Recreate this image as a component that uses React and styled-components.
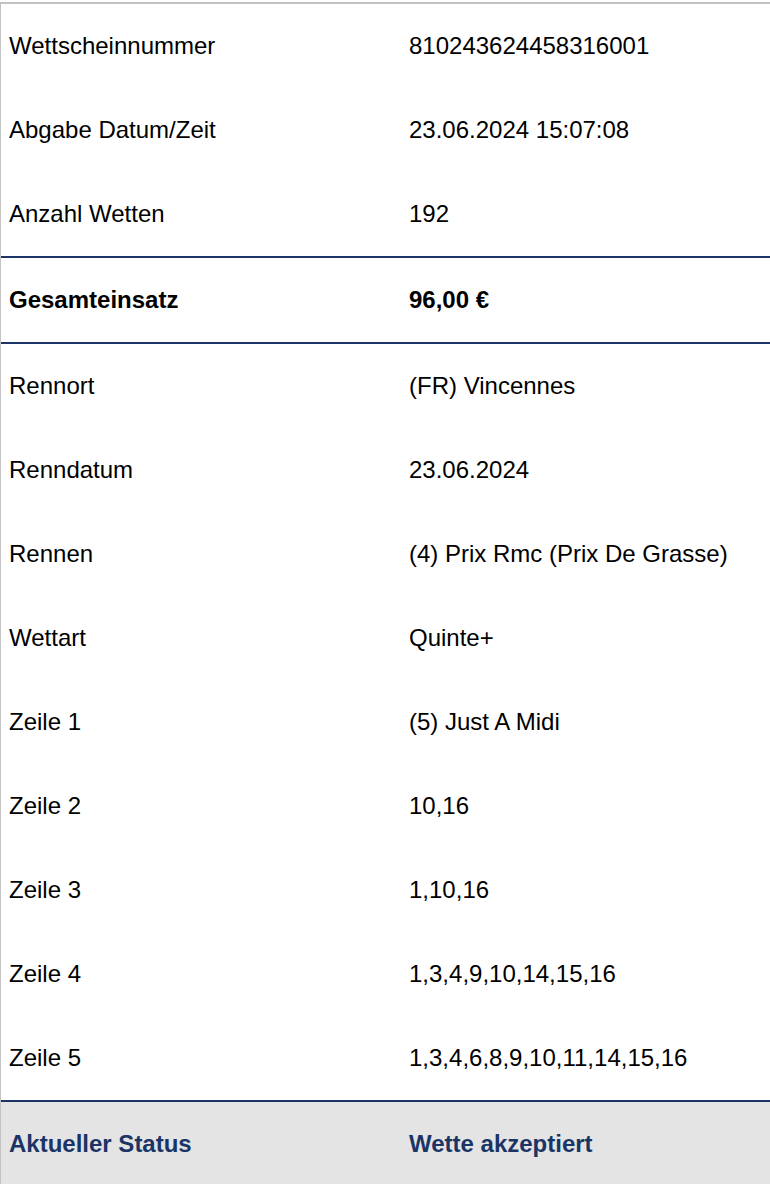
import React from "react";
import styled, { createGlobalStyle } from "styled-components";

const GlobalStyle = createGlobalStyle`
  body {
    margin: 0;
    background: #fff;
    font-family: "Liberation Sans", Arial, sans-serif;
  }
`;

const details = [
  ["Wettscheinnummer", "810243624458316001"],
  ["Abgabe Datum/Zeit", "23.06.2024 15:07:08"],
  ["Anzahl Wetten", "192"],
];

const race = [
  ["Rennort", "(FR) Vincennes"],
  ["Renndatum", "23.06.2024"],
  ["Rennen", "(4) Prix Rmc (Prix De Grasse)"],
  ["Wettart", "Quinte+"],
  ["Zeile 1", "(5) Just A Midi"],
  ["Zeile 2", "10,16"],
  ["Zeile 3", "1,10,16"],
  ["Zeile 4", "1,3,4,9,10,14,15,16"],
  ["Zeile 5", "1,3,4,6,8,9,10,11,14,15,16"],
];

function App() {
  return (
    <>
      <GlobalStyle />
      <Ticket>
        <Group>
          {details.map(([label, value]) => (
            <Row key={label}>
              <Cell>{label}</Cell>
              <Cell>{value}</Cell>
            </Row>
          ))}
        </Group>
        <Group $divided>
          <Row $bold>
            <Cell>Gesamteinsatz</Cell>
            <Cell>96,00 €</Cell>
          </Row>
        </Group>
        <Group $divided>
          {race.map(([label, value]) => (
            <Row key={label}>
              <Cell>{label}</Cell>
              <Cell>{value}</Cell>
            </Row>
          ))}
        </Group>
        <Group $divided $status>
          <Row $bold>
            <Cell>Aktueller Status</Cell>
            <Cell>Wette akzeptiert</Cell>
          </Row>
        </Group>
      </Ticket>
    </>
  );
}

export default App;

const Ticket = styled.div`
  margin-top: 2px;
  border-top: 2px solid #c2c2c2;
  border-left: 1px solid #c2c2c2;
  color: #000;
`;

const Group = styled.div`
  border-top: ${(p) => (p.$divided ? "2px solid #1b3466" : "none")};
  background: ${(p) => (p.$status ? "#e4e4e4" : "transparent")};
  color: ${(p) => (p.$status ? "#1b3466" : "inherit")};
`;

const Row = styled.div`
  display: grid;
  grid-template-columns: 400px 1fr;
  height: 84px;
  align-items: center;
  font-size: 24px;
  font-weight: ${(p) => (p.$bold ? 700 : 400)};
`;

const Cell = styled.div`
  padding: 0 8px;
  white-space: nowrap;
`;
